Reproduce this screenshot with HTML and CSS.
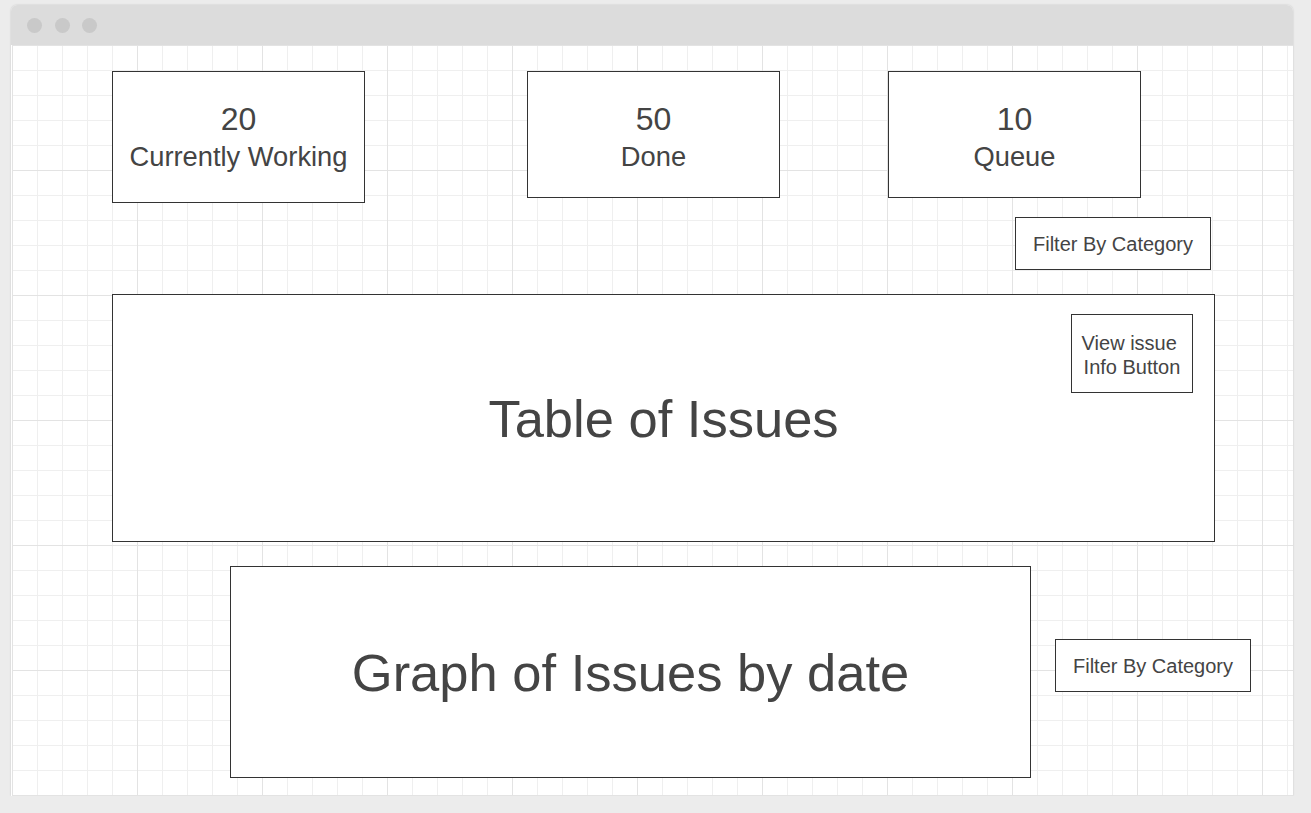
FILE: index.html
```html
<!DOCTYPE html>
<html lang="en">
<head>
    <meta charset="UTF-8">
    <meta name="viewport" content="width=device-width, initial-scale=1.0">
    <title>Issue Dashboard Mockup</title>
    <link rel="stylesheet" href="styles.css">
</head>
<body>
    <div class="window">
        <div class="title-bar">
            <span class="dot"></span>
            <span class="dot"></span>
            <span class="dot"></span>
        </div>
        <div class="canvas">
            <div class="stats-row">
                <div class="stat-box stat-working">
                    <div class="stat-number">20</div>
                    <div class="stat-label">Currently Working</div>
                </div>
                <div class="stat-box stat-done">
                    <div class="stat-number">50</div>
                    <div class="stat-label">Done</div>
                </div>
                <div class="stat-box stat-queue">
                    <div class="stat-number">10</div>
                    <div class="stat-label">Queue</div>
                </div>
            </div>

            <div class="filter-row">
                <div class="filter-box">Filter By Category</div>
            </div>

            <div class="table-box">
                <div class="big-label">Table of Issues</div>
                <div class="view-button">View issue&nbsp;<br>Info Button</div>
            </div>

            <div class="graph-row">
                <div class="graph-box">
                    <div class="big-label">Graph of Issues by date</div>
                </div>
                <div class="filter-box filter-graph">Filter By Category</div>
            </div>
        </div>
    </div>
</body>
</html>
```

FILE: styles.css
```css
body {
    margin: 0;
    padding: 0;
    background-color: #ececec;
    font-family: "Liberation Sans", Arial, sans-serif;
    color: #444;
}
.window {
    width: 1282px;
    height: 791px;
    margin: 5px 0 0 11px;
    background-color: #fff;
    border-radius: 6px 6px 0 0;
    box-shadow: 0 0 2px rgba(0, 0, 0, 0.18);
    overflow: hidden;
}
.title-bar {
    height: 40px;
    background-color: #dcdcdc;
    display: flex;
    align-items: center;
    padding-left: 16px;
    gap: 12.5px;
    box-sizing: border-box;
}
.dot {
    width: 15px;
    height: 15px;
    border-radius: 50%;
    background-color: #c9c9c9;
}
.canvas {
    height: 751px;
    margin-left: 1px;
    padding-top: 26px;
    box-sizing: border-box;
    background-color: #fff;
    background-image:
        linear-gradient(to right, #e3e3e3 1px, transparent 1px),
        linear-gradient(to bottom, #e3e3e3 1px, transparent 1px),
        linear-gradient(to right, #efefef 1px, transparent 1px),
        linear-gradient(to bottom, #efefef 1px, transparent 1px);
    background-size: 125px 125px, 125px 125px, 25px 25px, 25px 25px;
}
.stats-row {
    display: flex;
    align-items: flex-start;
    padding-left: 100px;
}
.stat-box {
    box-sizing: border-box;
    width: 253px;
    height: 127px;
    border: 1px solid #333;
    background-color: #fff;
    padding-top: 29px;
    text-align: center;
}
.stat-working {
    height: 132px;
}
.stat-done {
    margin-left: 162px;
}
.stat-queue {
    margin-left: 108px;
}
.stat-number {
    font-size: 32px;
    line-height: 36px;
}
.stat-label {
    font-size: 27.3px;
    line-height: 40px;
}
.filter-row {
    display: flex;
    padding-left: 1003px;
    margin-top: 14px;
}
.filter-box {
    box-sizing: border-box;
    width: 196px;
    height: 53px;
    border: 1px solid #333;
    background-color: #fff;
    display: flex;
    align-items: center;
    justify-content: center;
    font-size: 20px;
    padding-top: 2px;
}
.table-box {
    position: relative;
    box-sizing: border-box;
    width: 1103px;
    height: 248px;
    margin: 24px 0 0 100px;
    border: 1px solid #333;
    background-color: #fff;
    display: flex;
    align-items: center;
    justify-content: center;
}
.big-label {
    font-size: 52.5px;
}
.view-button {
    position: absolute;
    top: 19px;
    right: 21px;
    box-sizing: border-box;
    width: 122px;
    height: 79px;
    border: 1px solid #333;
    background-color: #fff;
    display: flex;
    align-items: center;
    justify-content: center;
    text-align: center;
    font-size: 20px;
    line-height: 24px;
    padding-top: 2px;
}
.graph-row {
    display: flex;
    align-items: flex-start;
    padding-left: 218px;
    margin-top: 24px;
}
.graph-box {
    box-sizing: border-box;
    width: 801px;
    height: 212px;
    border: 1px solid #333;
    background-color: #fff;
    display: flex;
    align-items: center;
    justify-content: center;
}
.filter-graph {
    margin: 73px 0 0 24px;
}
```
